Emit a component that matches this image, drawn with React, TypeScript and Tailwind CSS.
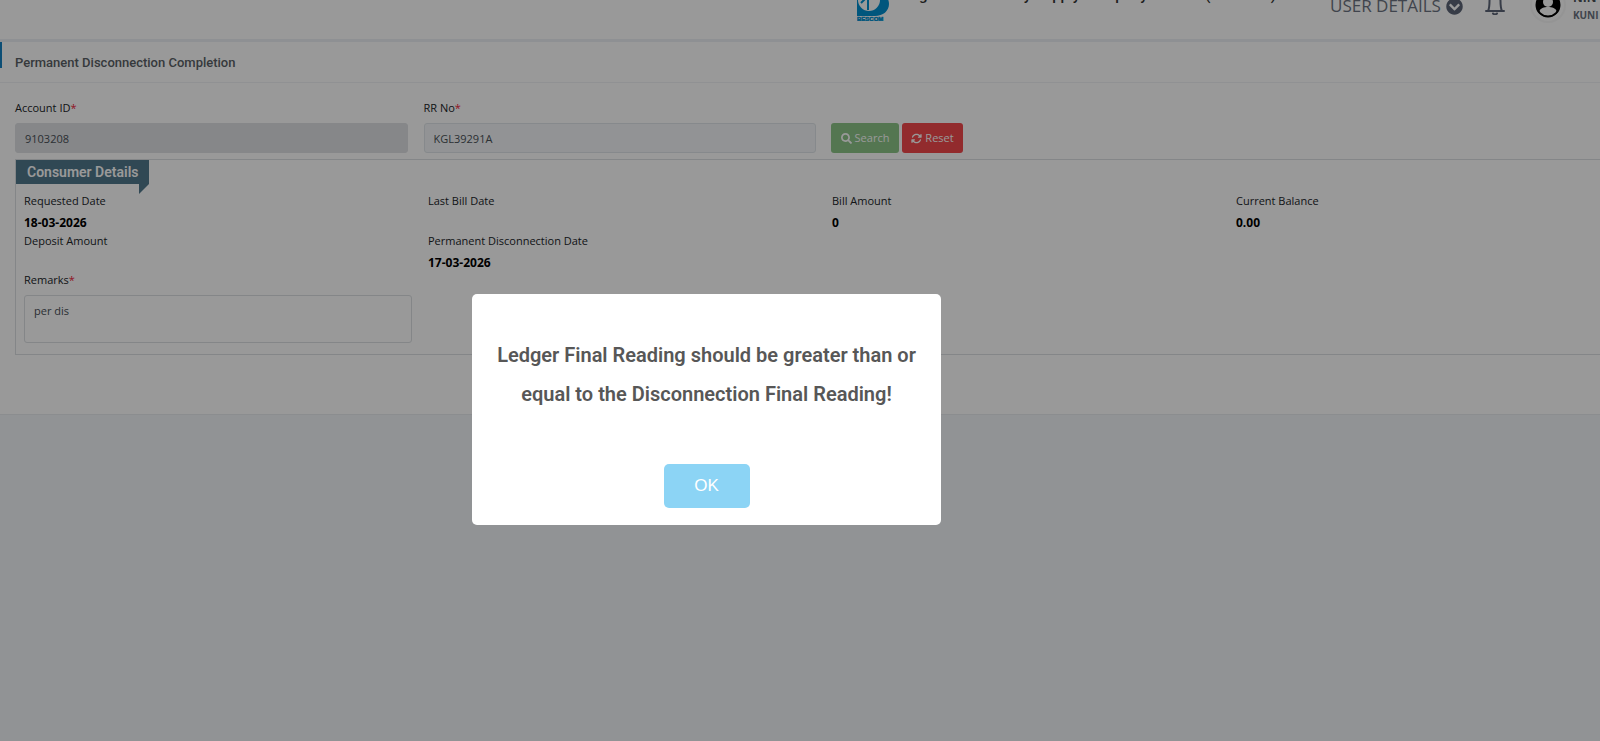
import type { ReactNode } from "react";
import { FaSearch, FaChevronCircleDown } from "react-icons/fa";
import { FaArrowsRotate } from "react-icons/fa6";

const details = [
  { label: "Requested Date", value: "18-03-2026" },
  { label: "Last Bill Date", value: "" },
  { label: "Bill Amount", value: "0" },
  { label: "Current Balance", value: "0.00" },
  { label: "Deposit Amount", value: "" },
  { label: "Permanent Disconnection Date", value: "17-03-2026" },
];

function Logo() {
  return (
    <svg viewBox="0 0 32 45" className="h-[45px] w-8 shrink-0" role="img" aria-label="BESCOM">
      <path d="M0 0h20c7 0 10 4 10 9 0 4-2 7-4 9 4 2 6 6 6 10 0 7-6 12-14 12H0z" fill="#0090d0" />
      <circle cx="12" cy="24" r="11" fill="#fff" />
      <path d="M11 12v22M4 27l7-7" stroke="#0090d0" strokeWidth="2" fill="none" />
      <text x="0" y="45" fontSize="6" fontWeight="900" stroke="#0090d0" strokeWidth="0.5" fill="#0090d0" fontFamily="Liberation Sans, sans-serif">
        BESCOM
      </text>
    </svg>
  );
}

function Bell() {
  return (
    <svg viewBox="0 0 20 24" className="h-6 w-5 shrink-0" fill="none" stroke="#5c6577" strokeWidth="2" aria-hidden="true">
      <path d="M1 20h18M3 20c1-2 1.500-4 1.500-10a5.500 6.500 0 0 1 11 0c0 6 .5 8 1.500 10" strokeLinecap="round" />
      <path d="M8 22.500c1 1 3 1 4 0" strokeLinecap="round" />
    </svg>
  );
}

function Avatar() {
  return (
    <svg viewBox="0 0 36 36" className="size-9 shrink-0" aria-hidden="true">
      <circle cx="18" cy="18" r="17" fill="#fff" stroke="#f7f7f7" strokeWidth="2" />
      <circle cx="18" cy="18" r="12" fill="#000" />
      <circle cx="18" cy="15" r="5" fill="#fff" />
      <path d="M9 25c1-4 5-5 9-5s8 1 9 5c-2 3-6 4-9 4s-7-1-9-4z" fill="#fff" />
      <circle cx="18" cy="18" r="11.500" fill="none" stroke="#000" strokeWidth="2" />
    </svg>
  );
}

function Header() {
  return (
    <header className="-mt-6 flex h-[66px] items-start justify-between border-b-[3px] border-[#edf1f6] bg-white pl-[857px]">
      <div className="flex gap-1">
        <Logo />
        <h1 className="mt-[9px] font-['Roboto',sans-serif] text-[15px] leading-5 font-medium whitespace-nowrap text-[#333]">
          Bangalore Electricity Supply Company Limited (BESCOM)
        </h1>
      </div>
      <div className="flex w-[318px] shrink-0 items-start text-[#6b7280]">
        <button type="button" className="mt-4 flex items-center gap-[5px] text-[17px] leading-7 whitespace-nowrap">
          USER DETAILS
          <FaChevronCircleDown className="size-[17px] text-[#5c6577]" />
        </button>
        <button type="button" aria-label="Notifications" className="ml-[22px] mt-[15px]">
          <Bell />
        </button>
        <div className="ml-[25px] mt-[11px] flex gap-[7px]">
          <Avatar />
          <div className="flex flex-col pt-[3px] font-bold">
            <span className="text-[12px] leading-4 text-[#495057]">NIN</span>
            <span className="text-[10px] leading-[18px]">KUNI</span>
          </div>
        </div>
      </div>
    </header>
  );
}

function Label({ htmlFor, children }: { htmlFor: string; children: ReactNode }) {
  return (
    <label htmlFor={htmlFor} className="block leading-4">
      {children}
      <span className="text-[#f01d3a]">*</span>
    </label>
  );
}

const field = "block w-full rounded-[3px] border px-[9px] text-[#495057] outline-none";

function AccountRow() {
  return (
    <form className="grid grid-cols-4 px-[7px] pt-[17px]" onSubmit={(e) => e.preventDefault()}>
      <div className="px-2">
        <Label htmlFor="account">Account ID</Label>
        <input id="account" disabled defaultValue="9103208" className={`${field} mt-[7px] h-[30px] border-[#dfe1e5] bg-[#dfe1e5]`} />
      </div>
      <div className="px-2">
        <Label htmlFor="rr">RR No</Label>
        <input id="rr" readOnly defaultValue="KGL39291A" className={`${field} mt-[7px] h-[30px] border-[#e0e5ea] bg-[#f3f6f8]`} />
      </div>
      <div className="flex items-end gap-[3px] px-[7px]">
        <button type="button" className="flex h-[30px] w-[68px] items-center justify-center gap-[3px] rounded-[3px] bg-[#8cc587] text-white">
          <FaSearch className="size-[11px]" />
          Search
        </button>
        <button type="button" className="flex h-[30px] w-[61px] items-center justify-center gap-[3px] rounded-[3px] bg-[#f3484b] text-white">
          <FaArrowsRotate className="size-[11px]" />
          Reset
        </button>
      </div>
    </form>
  );
}

function ConsumerDetails() {
  return (
    <section className="mx-[15px] mt-[6px] border border-[#dcdfe3] pb-[11px]">
      <div className="relative flex h-6 w-[133px] items-center bg-[#50788c] pl-[11px]">
        <h3 className="font-['Roboto',sans-serif] text-[14px] font-semibold whitespace-nowrap text-white">Consumer Details</h3>
        <svg viewBox="0 0 10 10" className="absolute top-full right-0 size-[10px]" aria-hidden="true">
          <path d="M0 0h10L0 10z" fill="#50788c" />
        </svg>
      </div>
      <dl className="mt-2 grid grid-cols-4 text-black">
        {details.map((d) => (
          <div key={d.label} className="h-10 px-2">
            <dt className="leading-[18px] text-[#212529]">{d.label}</dt>
            <dd className="mt-1 text-xs leading-[18px] font-bold">{d.value}</dd>
          </div>
        ))}
      </dl>
      <div className="w-1/4 px-2">
        <Label htmlFor="remarks">Remarks</Label>
        <textarea id="remarks" defaultValue="per dis" className={`${field} mt-[7px] h-12 resize-none border-[#dcdfe3] bg-white py-[6px] leading-[18px]`} />
      </div>
    </section>
  );
}

function Alert() {
  return (
    <div className="fixed inset-0 flex items-center justify-center bg-black/40 pt-[78px] pr-[187px]">
      <div role="alertdialog" aria-labelledby="alert-title" className="flex w-[469px] flex-col items-center rounded-[5px] bg-white px-6 pt-[42px] pb-[17px]">
        <h2 id="alert-title" className="text-center font-['Roboto',sans-serif] text-xl leading-[39px] font-semibold text-[#575757]">
          Ledger Final Reading should be greater than or equal to the Disconnection Final Reading!
        </h2>
        <button type="button" className="mt-[50px] h-11 w-[86px] rounded-[5px] bg-[#8cd4f5] font-['Liberation_Sans',sans-serif] text-[17px] text-white">
          OK
        </button>
      </div>
    </div>
  );
}

export default function App() {
  return (
    <div className="min-h-screen overflow-hidden bg-[#f2f5f8] font-['Open_Sans','Noto_Sans',sans-serif] text-[11px] text-[#212529]">
      <div className="w-[103%]">
        <Header />
        <main className="border-b border-[#e8ebee] bg-white pb-[59px]">
          <div className="flex h-[41px] items-start border-b border-[#f0f2f5]">
            <span className="h-[26px] w-[2px] bg-[#1483c4]" />
            <h2 className="ml-[13px] pt-3 font-['Roboto',sans-serif] text-[13px] leading-[18px] font-medium text-[#5b5f66]">
              Permanent Disconnection Completion
            </h2>
          </div>
          <AccountRow />
          <ConsumerDetails />
        </main>
      </div>
      <Alert />
    </div>
  );
}
